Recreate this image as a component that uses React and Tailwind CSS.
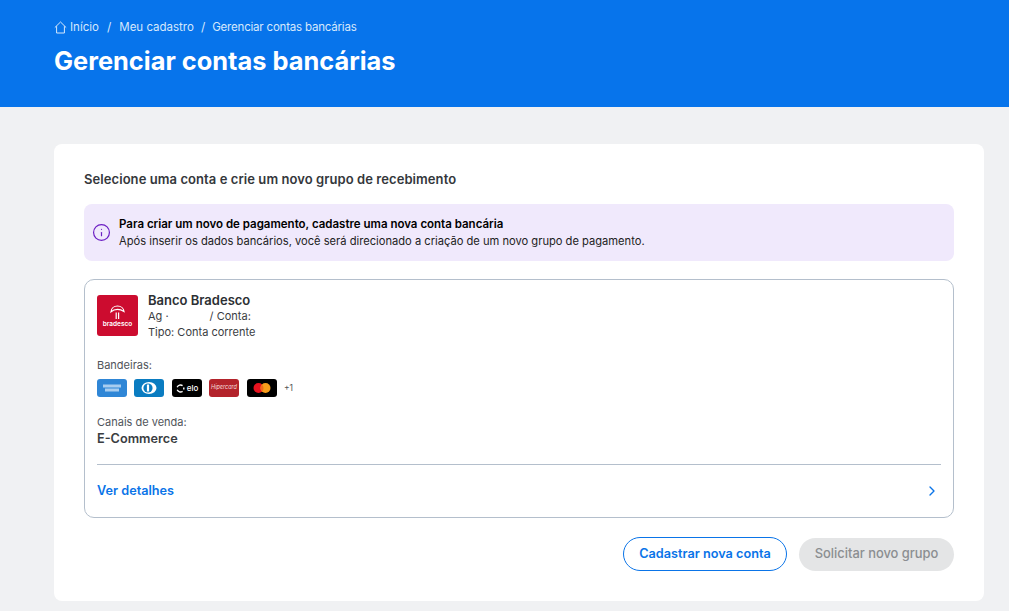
import React from 'react';
import { Info, ChevronRight } from 'lucide-react';

// --- Bandeiras ---
function CardFlag({ className, children }) {
    return <div className={`w-[30px] h-[18px] rounded-[3px] flex items-center justify-center overflow-hidden ${className}`}>{children}</div>;
}

function Flags() {
    return (
        <div className="flex items-center gap-[7px] mt-[7px]">
            <CardFlag className="bg-[#2f86d6]">
                <svg width="20" height="8" viewBox="0 0 20 8">
                    <rect x="1" y="0.5" width="18" height="3" fill="#a9cdef" />
                    <rect x="3" y="4.5" width="14" height="3" fill="#a9cdef" />
                </svg>
            </CardFlag>
            <CardFlag className="bg-[#0a7cc1] mr-[1px]">
                <svg width="18" height="14" viewBox="0 0 18 14">
                    <ellipse cx="9" cy="7" rx="7.5" ry="6" fill="#fff" />
                    <circle cx="8" cy="7" r="4.6" fill="#0a7cc1" />
                    <rect x="6.9" y="3.5" width="2.2" height="7" fill="#fff" />
                </svg>
            </CardFlag>
            <CardFlag className="bg-black gap-[2px]">
                <svg width="9" height="9" viewBox="0 0 9 9" fill="none" stroke="#fff" strokeWidth="1.4">
                    <path d="M6.6 1.6A3.6 3.6 0 0 0 1.2 3.2M1.2 5.8A3.6 3.6 0 0 0 6.6 7.4" />
                    <path d="M7.8 3.4v2.2" />
                </svg>
                <span className="text-white text-[8px] leading-none font-medium">elo</span>
            </CardFlag>
            <CardFlag className="bg-[#b3232b] mr-[1px]">
                <span className="text-[#f6dede] text-[5.5px] leading-none italic">Hipercard</span>
            </CardFlag>
            <CardFlag className="bg-black">
                <svg width="20" height="12" viewBox="0 0 20 12">
                    <circle cx="6.5" cy="6" r="5" fill="#e8131f" />
                    <circle cx="13.5" cy="6" r="5" fill="#f79e1b" />
                    <path d="M10 2.4a5 5 0 0 1 0 7.2a5 5 0 0 1 0-7.2z" fill="#f26a1b" />
                </svg>
            </CardFlag>
            <span className="text-[8.5px] text-[#555]">+1</span>
        </div>
    );
}

function AccountCard() {
    return (
        <div className="mt-[18px] border border-[#b4bfcc] rounded-[10px] px-3 pt-[15px] h-[239px] text-[#3a3d42]">
            <div className="flex gap-[10px]">
                <div className="w-[41px] h-[41px] rounded-[3px] bg-[#cc0c2f] flex flex-col items-center pt-[10px]">
                    <svg width="15" height="15" viewBox="0 0 15 15" fill="none" stroke="#fff" strokeWidth="1.2">
                        <path d="M1 6.8C1.2 3.4 4 1 7.5 1s6.2 2.4 6.5 5.6C11.8 5 9.6 4.3 7.5 4.3S3 5 1 6.8z" />
                        <path d="M6.2 7.5v6.5M8.6 7.5v6.5" />
                    </svg>
                    <span className="text-white text-[6.5px] leading-[8px] font-semibold">bradesco</span>
                </div>
                <div className="text-[11px] leading-[16px] -mt-[3px]">
                    <p className="text-[13px] leading-[16px] font-semibold text-[#2c2f33]">Banco Bradesco</p>
                    <p>Ag ·<span className="inline-block w-[41px]"></span>/ Conta:</p>
                    <p>Tipo: Conta corrente</p>
                </div>
            </div>
            <p className="text-[11px] leading-[14px] mt-[18px] text-[#50545a]">Bandeiras:</p>
            <Flags />
            <p className="text-[11px] leading-[14px] mt-[18px] text-[#50545a]">Canais de venda:</p>
            <p className="text-[12.7px] leading-[16px] mt-[2px] font-semibold text-[#3a3d42]">E-Commerce</p>
            <div className="border-t border-[#b4bfcc] mt-[17px] pt-[18px] flex items-center justify-between">
                <span className="text-[12.7px] leading-[16px] font-semibold text-[#0a74e8]">Ver detalhes</span>
                <ChevronRight size={16} strokeWidth={2} className="text-[#0a74e8] mr-[1px]" />
            </div>
        </div>
    );
}

export default function App() {
    return (
        <div className="h-[611px] overflow-hidden bg-[#f0f1f3] font-['Inter',sans-serif]">
            <header className="h-[107px] bg-[#0774eb] pl-[54px] pt-[20px]">
                <nav className="flex items-center text-[11.5px] leading-[14px] text-[#d6e8fc]">
                    <svg width="13" height="13" viewBox="0 0 13 13" fill="none" stroke="#d6e8fc" strokeWidth="1" className="mr-[3px]">
                        <path d="M.8 6.6 6.5 1l5.7 5.6M2.6 5.2v6.8h7.8V5.2" />
                    </svg>
                    <span>Início</span>
                    <span className="mx-[8px] text-[12px]">/</span>
                    <span>Meu cadastro</span>
                    <span className="ml-[7px] mr-[7px] text-[12px]">/</span>
                    <span className="tracking-[-0.2px]">Gerenciar contas bancárias</span>
                </nav>
                <h1 className="text-[25.4px] leading-[30px] font-bold text-white mt-[12px]">Gerenciar contas bancárias</h1>
            </header>
            <main className="mt-[37px] mx-[54px] w-[930px] h-[457px] bg-white rounded-[8px] px-[30px] pt-[27px]">
                <h2 className="text-[13px] leading-[16px] font-semibold tracking-[0.07px] text-[#34373b]">Selecione uma conta e crie um novo grupo de recebimento</h2>
                <div className="mt-[17px] h-[57px] bg-[#f0e9fc] rounded-[8px] flex items-center pl-[8px]">
                    <Info size={19} strokeWidth={1.5} className="text-[#6c1fc4] mr-[8px]" />
                    <div className="text-[11.15px] leading-[17px] text-[#222]">
                        <p className="text-[11.5px] font-semibold text-black">Para criar um novo de pagamento, cadastre uma nova conta bancária</p>
                        <p>Após inserir os dados bancários, você será direcionado a criação de um novo grupo de pagamento.</p>
                    </div>
                </div>
                <AccountCard />
                <div className="flex justify-end items-center gap-3 mt-[19px]">
                    <button className="w-[164px] h-[34px] rounded-full border border-[#0a74e8] text-[12.7px] font-semibold text-[#0a74e8]">Cadastrar nova conta</button>
                    <button className="w-[155px] h-[33px] rounded-full bg-[#e4e5e6] text-[12.9px] font-medium text-[#8b8e91]">Solicitar novo grupo</button>
                </div>
            </main>
        </div>
    );
}
